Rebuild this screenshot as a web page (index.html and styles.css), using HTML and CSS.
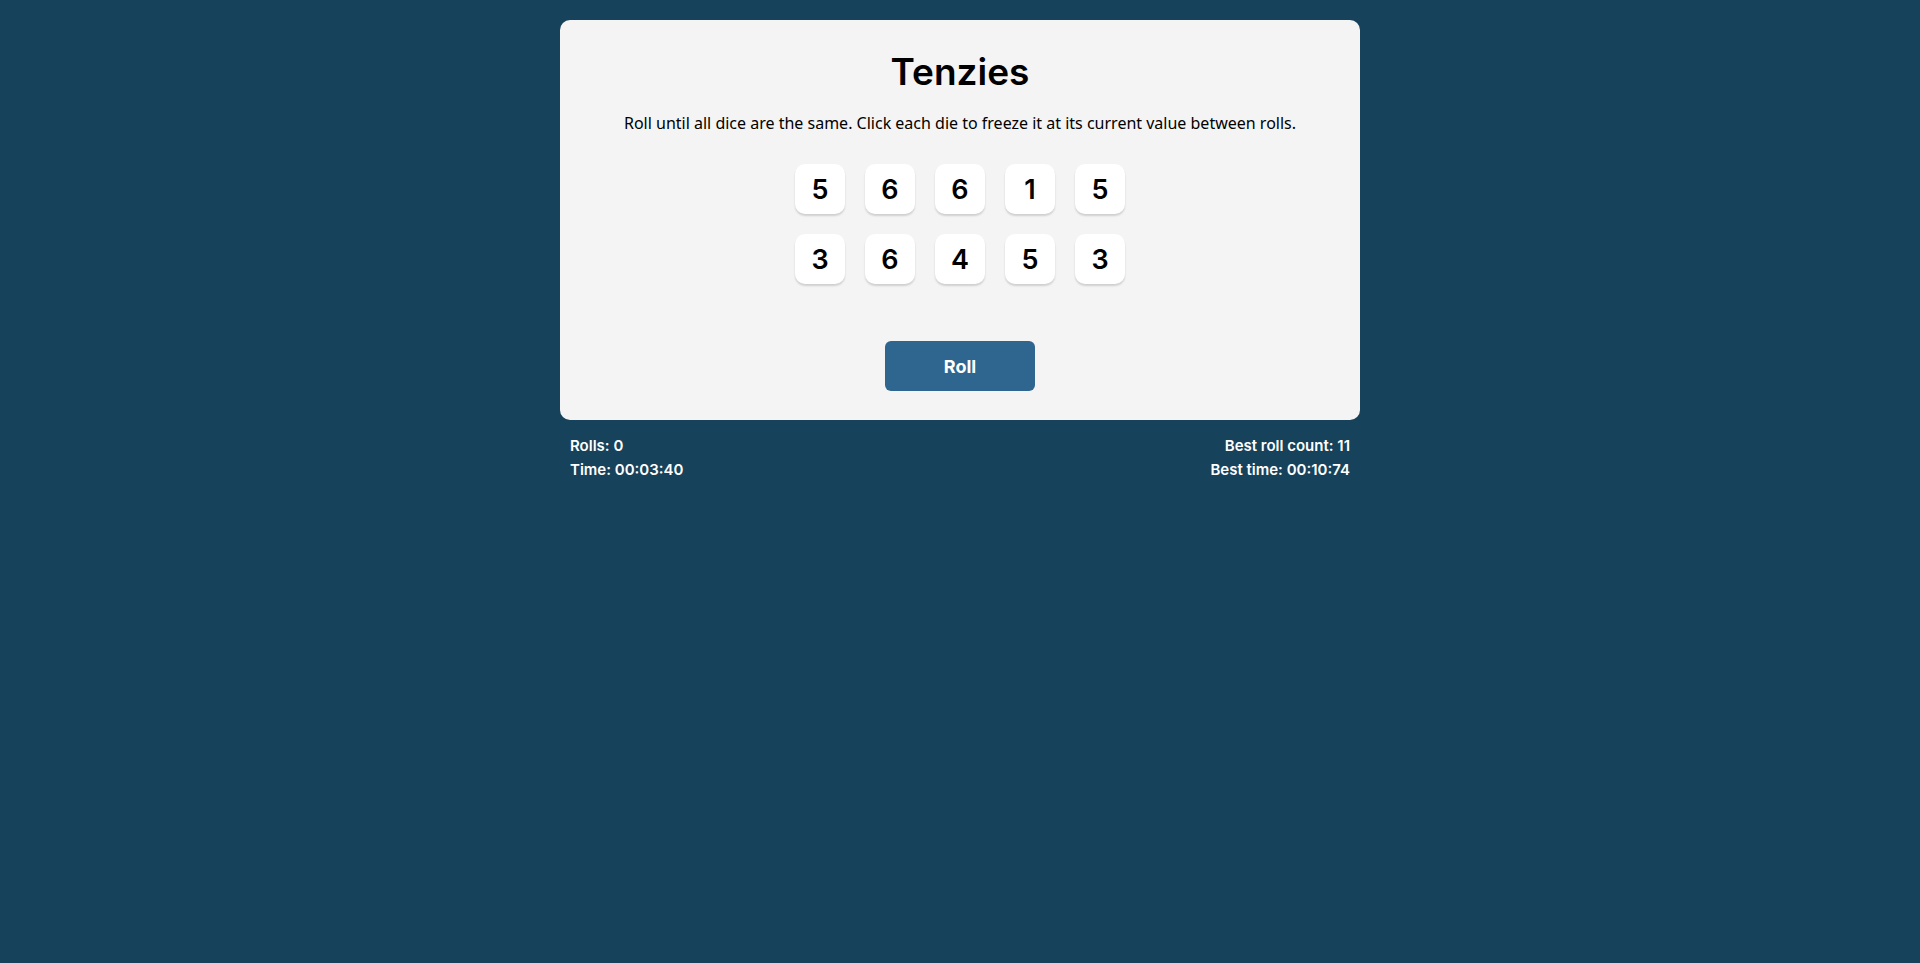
FILE: index.html
```html
<!DOCTYPE html>
<html lang="en">
<head>
<meta charset="utf-8">
<title>Tenzies</title>
<link rel="stylesheet" href="styles.css">
</head>
<body>
<div class="app">
  <main class="card">
    <h1 class="title">Tenzies</h1>
    <p class="instructions">Roll until all dice are the same. Click each die to freeze it at its current value between rolls.</p>
    <div class="dice">
      <button class="die">5</button>
      <button class="die">6</button>
      <button class="die">6</button>
      <button class="die">1</button>
      <button class="die">5</button>
      <button class="die">3</button>
      <button class="die">6</button>
      <button class="die">4</button>
      <button class="die">5</button>
      <button class="die">3</button>
    </div>
    <button class="roll">Roll</button>
  </main>
  <footer class="stats">
    <div class="stats-col">
      <div>Rolls: 0</div>
      <div>Time: 00:03:40</div>
    </div>
    <div class="stats-col right">
      <div>Best roll count: 11</div>
      <div>Best time: 00:10:74</div>
    </div>
  </footer>
</div>
</body>
</html>
```
FILE: styles.css
```css
html, body {
  margin: 0;
  padding: 0;
  background: #16425b;
  min-height: 100%;
}

.app {
  width: 800px;
  margin: 20px auto 0;
  font-family: Inter, "Open Sans", sans-serif;
}

.card {
  background: #f4f4f4;
  border-radius: 10px;
  padding: 33px 0 29px;
  display: flex;
  flex-direction: column;
  align-items: center;
}

.title {
  margin: 0;
  font-size: 37px;
  line-height: 38px;
  font-weight: 600;
  color: #000;
}

.instructions {
  margin: 22px 0 0;
  font-family: "Noto Sans", "Open Sans", sans-serif;
  font-size: 16px;
  line-height: 20px;
  color: #000;
}

.dice {
  margin-top: 31px;
  display: grid;
  grid-template-columns: repeat(5, 50px);
  grid-auto-rows: 50px;
  gap: 20px;
}

.die {
  border: none;
  margin: 0;
  padding: 0;
  background: #fff;
  border-radius: 10px;
  box-shadow: 0 2px 2px rgba(0, 0, 0, 0.15);
  font-family: Inter, "Open Sans", sans-serif;
  font-size: 27px;
  font-weight: 600;
  color: #000;
  display: flex;
  align-items: center;
  justify-content: center;
  cursor: pointer;
}

.roll {
  margin-top: 57px;
  width: 150px;
  height: 50px;
  border: none;
  border-radius: 6px;
  background: #2f6690;
  color: #fff;
  font-family: Inter, "Open Sans", sans-serif;
  font-size: 18px;
  font-weight: 700;
  cursor: pointer;
}

.stats {
  display: flex;
  justify-content: space-between;
  padding: 14px 10px 0;
  color: #fff;
  font-size: 15px;
  font-weight: 600;
  line-height: 24px;
}

.stats-col.right {
  text-align: right;
}
```
